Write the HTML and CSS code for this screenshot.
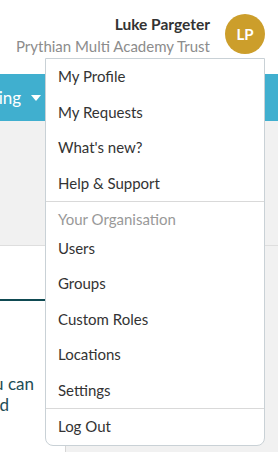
FILE: index.html
```html
<!DOCTYPE html>
<html lang="en">
<head>
    <meta charset="UTF-8">
    <meta name="viewport" content="width=device-width, initial-scale=1.0">
    <title>Account Menu</title>
    <link rel="stylesheet" href="styles.css">
</head>
<body>
    <div class="page">
        <header class="topbar">
            <div class="user-info">
                <div class="user-name">Luke Pargeter</div>
                <div class="user-org">Prythian Multi Academy Trust</div>
            </div>
            <div class="avatar">LP</div>

            <nav class="user-menu">
                <a class="menu-item" href="#">My Profile</a>
                <a class="menu-item" href="#">My Requests</a>
                <a class="menu-item" href="#">What's new?</a>
                <a class="menu-item" href="#">Help &amp; Support</a>
                <div class="menu-section">
                    <div class="menu-label">Your Organisation</div>
                    <a class="menu-item" href="#">Users</a>
                    <a class="menu-item" href="#">Groups</a>
                    <a class="menu-item" href="#">Custom Roles</a>
                    <a class="menu-item" href="#">Locations</a>
                    <a class="menu-item" href="#">Settings</a>
                </div>
                <div class="menu-section">
                    <a class="menu-item" href="#">Log Out</a>
                </div>
            </nav>
        </header>

        <div class="navbar">
            <span class="nav-link">Booking</span>
            <span class="caret"></span>
        </div>

        <div class="filters"></div>

        <div class="content">
            <div class="panel">
                <div class="tab"></div>
                <div class="intro">
                    <div class="intro-line line-one">Here you can</div>
                    <div class="intro-line line-two">and find</div>
                </div>
            </div>
        </div>
    </div>
</body>
</html>
```

FILE: styles.css
```css
body {
    margin: 0;
    font-family: Lato, "Open Sans", sans-serif;
    background-color: #f1f1f1;
    overflow: hidden;
}

.page {
    width: 278px;
    height: 452px;
    display: flex;
    flex-direction: column;
}

.topbar {
    position: relative;
    height: 74px;
    background: #fff;
    display: flex;
    align-items: flex-start;
    justify-content: flex-end;
    padding: 14px 13px 0 0;
    box-sizing: border-box;
    gap: 15px;
}

.user-info {
    text-align: right;
    padding-top: 1px;
}

.user-name {
    font-weight: bold;
    font-size: 15.5px;
    color: #333;
    line-height: 18px;
}

.user-org {
    font-size: 15px;
    color: #8c8c8c;
    line-height: 20px;
    margin-top: 3px;
}

.avatar {
    width: 40px;
    height: 40px;
    border-radius: 50%;
    background-color: #cc9e2b;
    color: #fff;
    font-weight: bold;
    font-size: 15px;
    display: flex;
    align-items: center;
    justify-content: center;
}

.user-menu {
    position: absolute;
    top: 58px;
    left: 45px;
    width: 220px;
    background: #fff;
    border: 1px solid #c9d1d6;
    border-radius: 0 0 8px 8px;
    box-sizing: border-box;
    z-index: 10;
}

.menu-item {
    display: block;
    padding: 7px 12px;
    line-height: 21.5px;
    font-size: 15px;
    color: #333;
    text-decoration: none;
}

.menu-section {
    border-top: 1px solid #d9d9d9;
}

.menu-label {
    font-size: 15px;
    color: #999;
    padding: 7px 12px 0;
    line-height: 21.5px;
}

.navbar {
    height: 47px;
    background-color: #40afcf;
    display: flex;
    align-items: center;
    gap: 10px;
}

.nav-link {
    color: #fff;
    font-size: 17px;
    white-space: nowrap;
    margin-left: -40px;
}

.caret {
    flex-shrink: 0;
    width: 0;
    height: 0;
    border-left: 5px solid transparent;
    border-right: 5px solid transparent;
    border-top: 6px solid #fff;
}

.filters {
    height: 124px;
    border-bottom: 1px solid #dedede;
}

.content {
    flex: 1;
}

.panel {
    width: 65px;
    height: 100%;
    background: #fff;
    border-right: 1px solid #d6d6d6;
    overflow: hidden;
}

.tab {
    margin-top: 53px;
    height: 2px;
    width: 45px;
    background-color: #0f4a52;
}

.intro {
    margin-top: 72px;
    color: #1d4d56;
    font-size: 17px;
    line-height: 21px;
}

.intro-line {
    display: flex;
    justify-content: flex-end;
    white-space: nowrap;
}

.line-one {
    width: 34px;
}

.line-two {
    width: 9px;
}
```
